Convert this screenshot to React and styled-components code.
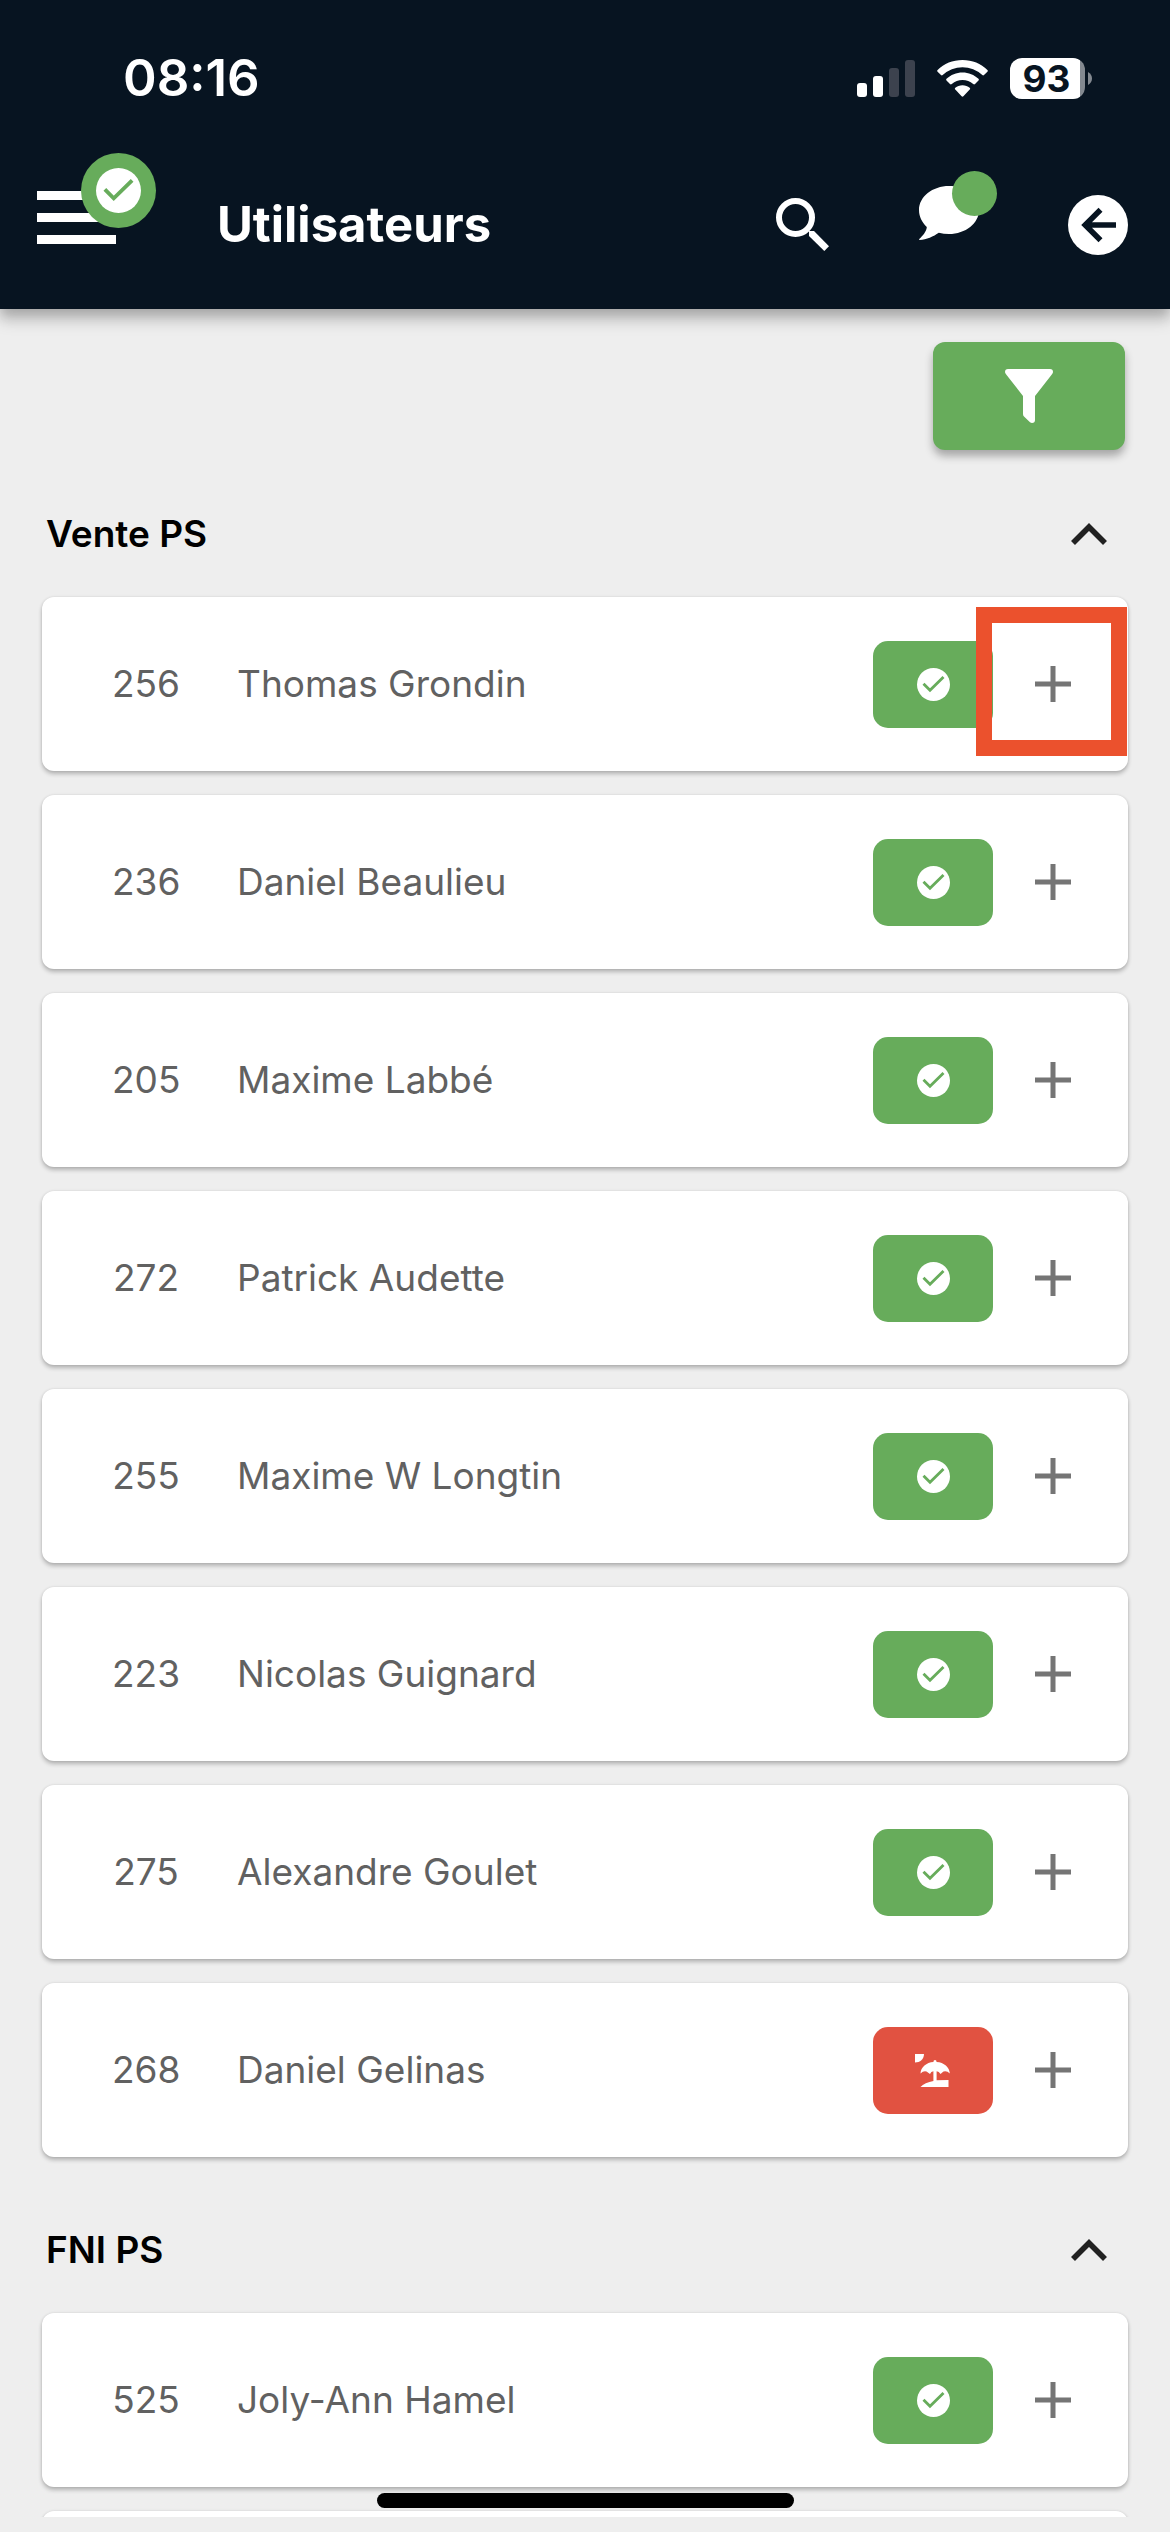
import React, { useState } from "react";
import styled, { createGlobalStyle } from "styled-components";

const GREEN = "#67ac5b";
const RED = "#e15241";
const NAVY = "#071421";

const GlobalStyle = createGlobalStyle`
  *, *::before, *::after { box-sizing: border-box; }
  body {
    margin: 0;
    background: #eeeeee;
    font-family: Inter, Roboto, "Liberation Sans", sans-serif;
  }
  button { font: inherit; color: inherit; border: 0; padding: 0; background: none; cursor: pointer; }
  svg { display: block; flex: none; }
`;

const Screen = styled.div`
  display: flex;
  flex-direction: column;
  height: 100vh;
  padding-bottom: 15px;
  overflow: hidden;
`;

const Header = styled.header`
  z-index: 1;
  flex: none;
  background: ${NAVY};
  color: #fff;
  box-shadow: 0 6px 12px rgba(0, 0, 0, 0.2), 0 12px 15px rgba(0, 0, 0, 0.14);
`;

const StatusBar = styled.div`
  display: flex;
  align-items: center;
  justify-content: space-between;
  height: 156px;
  padding: 0 78px 0 123px;
`;

const Clock = styled.time`
  font-size: 51px;
  font-weight: 600;
  line-height: 60px;
`;

const StatusIcons = styled.div`
  display: flex;
  align-items: center;
  gap: 22px;
`;

const Battery = styled.div`
  display: flex;
  align-items: center;
  gap: 3px;
`;

const BatteryBody = styled.div`
  display: grid;
  place-items: center;
  width: 75px;
  height: 41px;
  padding-right: 2px;
  border-radius: 12px;
  background: linear-gradient(to right, #fff 70px, #838990 70px);
  color: ${NAVY};
  font-size: 37px;
  font-weight: 700;
  line-height: 41px;
`;

const Toolbar = styled.div`
  display: flex;
  align-items: center;
  height: 153px;
  padding: 0 42px 31px 37px;
`;

const MenuButton = styled.button`
  position: relative;
  display: grid;
  gap: 13px;
  width: 79px;
`;

const MenuBar = styled.span`
  height: 9px;
  background: #fff;
`;

const MenuBadge = styled.span`
  position: absolute;
  left: 44px;
  top: -38px;
  display: grid;
  place-items: center;
  width: 75px;
  height: 75px;
  border-radius: 50%;
  background: ${GREEN};
`;

const Title = styled.h1`
  flex: 1;
  margin: 0;
  padding: 15px 0 0 101px;
  font-size: 49px;
  font-weight: 700;
  line-height: 60px;
`;

const Actions = styled.div`
  display: flex;
  align-items: center;
  gap: 89px;
  padding-top: 15px;
`;

const ActionButton = styled.button`
  position: relative;
  display: block;
  padding-bottom: ${(p) => (p.$raised ? 24 : 0)}px;
`;

const NoticeDot = styled.span`
  position: absolute;
  top: -15px;
  right: -18px;
  width: 45px;
  height: 45px;
  border-radius: 50%;
  background: ${GREEN};
`;

const Content = styled.main`
  flex: 1;
  min-height: 0;
  overflow-y: auto;
  scrollbar-width: none;
  padding: 33px 42px 0;
`;

const FilterRow = styled.div`
  display: flex;
  justify-content: flex-end;
  padding-right: 3px;
`;

const FilterButton = styled.button`
  display: grid;
  place-items: center;
  width: 192px;
  height: 108px;
  border-radius: 12px;
  background: ${GREEN};
  box-shadow: 0 6px 9px rgba(0, 0, 0, 0.3);
`;

const Section = styled.section`
  padding-top: 46px;
`;

const SectionHeader = styled.h2`
  margin: 0;
`;

const SectionToggle = styled.button`
  display: flex;
  align-items: center;
  justify-content: space-between;
  width: 100%;
  height: 75px;
  padding: 0 21px 0 4px;
  color: #000;
  font-size: 37px;
  font-weight: 600;
  line-height: 48px;
`;

const CardList = styled.ul`
  display: grid;
  gap: 24px;
  margin: 0;
  padding: 26px 0 9px;
  list-style: none;
`;

const Card = styled.li`
  position: relative;
  display: grid;
  grid-template-columns: 68px 1fr 120px 96px;
  align-items: center;
  height: 174px;
  padding: 0 39px 0 70px;
  border-radius: 12px;
  background: #fff;
  box-shadow: 0 3px 4px rgba(0, 0, 0, 0.24), 0 0 3px rgba(0, 0, 0, 0.1);
  color: #616161;
  font-size: 37px;
  line-height: 48px;
`;

const UserId = styled.span`
  text-align: center;
`;

const UserName = styled.span`
  padding-left: 57px;
`;

const Status = styled.span`
  display: grid;
  place-items: center;
  height: 87px;
  border-radius: 15px;
  background: ${(p) => (p.$away ? RED : GREEN)};
`;

const AddButton = styled.button`
  display: grid;
  place-items: center;
  width: 72px;
  height: 72px;
  margin-left: 24px;
  color: #757575;
`;

const Highlight = styled.span`
  position: absolute;
  top: 10px;
  right: 1px;
  width: 151px;
  height: 149px;
  border: 16px solid #eb512d;
  pointer-events: none;
`;

const HomeIndicator = styled.div`
  position: fixed;
  bottom: 24px;
  left: 50%;
  width: 417px;
  height: 15px;
  margin-left: -208px;
  border-radius: 8px;
  background: #000;
`;

const SignalIcon = () => (
  <svg width="58" height="37" viewBox="0 0 58 37" aria-hidden="true">
    <rect x="0" y="23" width="10" height="14" rx="3" fill="#fff" />
    <rect x="16" y="16" width="10" height="21" rx="3" fill="#fff" />
    <rect x="32" y="8" width="10" height="29" rx="3" fill="#3c424e" />
    <rect x="48" y="0" width="10" height="37" rx="3" fill="#3c424e" />
  </svg>
);

const WifiIcon = () => (
  <svg width="51" height="37" viewBox="0 0 51 37" fill="#fff" aria-hidden="true">
    <path d="M25.500 0C35.300 0 44 3.700 50.400 9.900Q51.300 10.800 50.400 11.700L47 15.100Q46.200 15.900 45.300 15.100A29 29 0 0 0 5.700 15.100Q4.800 15.900 4 15.100L.6 11.700Q-.3 10.800 .6 9.900C7 3.700 15.700 0 25.500 0Z" />
    <path d="M25.500 12.400C31.600 12.400 37.200 14.700 41.500 18.700Q42.400 19.600 41.500 20.500L38 24Q37.200 24.800 36.200 24A16.500 16.500 0 0 0 14.800 24Q13.800 24.800 13 24L9.500 20.500Q8.600 19.600 9.500 18.700C13.800 14.700 19.400 12.400 25.500 12.400Z" />
    <path d="M25.500 25.200C28.300 25.200 30.800 26.200 32.700 27.800Q33.600 28.700 32.700 29.600L26.400 36.200Q25.500 37.100 24.600 36.200L18.300 29.600Q17.400 28.700 18.300 27.800C20.200 26.200 22.700 25.200 25.500 25.200Z" />
  </svg>
);

const BatteryTip = () => (
  <svg width="4" height="13" viewBox="0 0 4 13" aria-hidden="true">
    <path d="M0 0C2.500 1.200 4 3.700 4 6.500S2.500 11.800 0 13Z" fill="#838990" />
  </svg>
);

const CheckDisc = ({ size }) => (
  <svg width={size} height={size} viewBox="0 0 33 33" aria-hidden="true">
    <circle cx="16.500" cy="16.500" r="16.500" fill="#fff" />
    <path d="M6.500 15.700L13 22.300L26.500 9" fill="none" stroke={GREEN} strokeWidth="2.800" />
  </svg>
);

const SearchIcon = () => (
  <svg width="54" height="54" viewBox="0 0 54 54" aria-hidden="true">
    <circle cx="19.500" cy="19.500" r="16.500" fill="none" stroke="#fff" strokeWidth="6" />
    <path d="M33 33h5L53 48.300L48.300 53L33 38Z" fill="#fff" />
  </svg>
);

const ChatIcon = () => (
  <svg width="60" height="54" viewBox="0 0 60 54" fill="#fff" aria-hidden="true">
    <path d="M30 0C46.600 0 60 10.700 60 24S46.600 48 30 48C26.500 48 23 47.600 19.800 46.800C14.500 50.400 7.500 54 .6 54C-.2 54 0 53.300 .5 52.800C3.500 50 7.700 45.200 7.800 41C3 36.500 0 30.500 0 24C0 10.700 13.400 0 30 0Z" />
  </svg>
);

const BackIcon = () => (
  <svg width="60" height="60" viewBox="0 0 60 60" aria-hidden="true">
    <circle cx="30" cy="30" r="30" fill="#fff" />
    <path d="M48 30H18M32.500 14.700L17.200 30L32.500 45.300" fill="none" stroke={NAVY} strokeWidth="5.600" />
  </svg>
);

const FunnelIcon = () => (
  <svg width="48" height="54" viewBox="0 0 48 54" fill="#fff" aria-hidden="true">
    <path d="M3 0H45Q48 0 48 3Q48 4 47 5.300L30 27V51Q30 54 27 54Q26 54 25 53.200L19 47.500Q18 46.500 18 45V27L1 5.300Q0 4 0 3Q0 0 3 0Z" />
  </svg>
);

const ChevronUp = ({ open }) => (
  <svg width="36" height="22" viewBox="0 0 36 22" aria-hidden="true">
    <path
      d={open ? "M2 20L18 4L34 20" : "M2 2L18 18L34 2"}
      fill="none"
      stroke="#212121"
      strokeWidth="5.600"
    />
  </svg>
);

const PlusIcon = () => (
  <svg width="36" height="36" viewBox="0 0 36 36" aria-hidden="true">
    <path d="M18 0V36M0 18H36" stroke="currentColor" strokeWidth="5" />
  </svg>
);

const BeachIcon = () => (
  <svg width="36" height="33" viewBox="0 0 36 33" fill="#fff" aria-hidden="true">
    <path d="M0 0H9C9 5 5 8.500 0 8.500Z" />
    <path d="M20 6Q21.600 6 21.600 8C29 8.500 34.500 13 34.800 19.500Q32 16.500 28.500 17.500L25.500 20Q24 17.500 21.600 17.300V26.300Q28 26 33.500 26V33H5.500C8 30 13 28 18.400 27V17.300Q16 17.500 15 20L11.500 17.500Q8.500 16.500 5.500 19.500C5.800 13 11.500 8.500 18.400 8Q18.400 6 20 6Z" />
  </svg>
);

const sections = [
  {
    title: "Vente PS",
    users: [
      { id: 256, name: "Thomas Grondin", highlighted: true },
      { id: 236, name: "Daniel Beaulieu" },
      { id: 205, name: "Maxime Labbé" },
      { id: 272, name: "Patrick Audette" },
      { id: 255, name: "Maxime W Longtin" },
      { id: 223, name: "Nicolas Guignard" },
      { id: 275, name: "Alexandre Goulet" },
      { id: 268, name: "Daniel Gelinas", away: true },
    ],
  },
  { title: "FNI PS", users: [{ id: 525, name: "Joly-Ann Hamel" }], loading: true },
];

function UserCard({ user }) {
  return (
    <Card>
      <UserId>{user.id}</UserId>
      <UserName>{user.name}</UserName>
      <Status $away={user.away}>{user.away ? <BeachIcon /> : <CheckDisc size={33} />}</Status>
      <AddButton type="button" aria-label={`Ajouter ${user.name}`}>
        <PlusIcon />
      </AddButton>
      {user.highlighted && <Highlight />}
    </Card>
  );
}

function UserSection({ section }) {
  const [open, setOpen] = useState(true);
  return (
    <Section>
      <SectionHeader>
        <SectionToggle type="button" aria-expanded={open} onClick={() => setOpen(!open)}>
          {section.title}
          <ChevronUp open={open} />
        </SectionToggle>
      </SectionHeader>
      {open && (
        <CardList>
          {section.users.map((user) => (
            <UserCard key={user.id} user={user} />
          ))}
          {section.loading && <Card aria-hidden="true" />}
        </CardList>
      )}
    </Section>
  );
}

export default function App() {
  return (
    <Screen>
      <GlobalStyle />
      <Header>
        <StatusBar>
          <Clock>08:16</Clock>
          <StatusIcons>
            <SignalIcon />
            <WifiIcon />
            <Battery>
              <BatteryBody>93</BatteryBody>
              <BatteryTip />
            </Battery>
          </StatusIcons>
        </StatusBar>
        <Toolbar>
          <MenuButton type="button" aria-label="Menu">
            <MenuBar />
            <MenuBar />
            <MenuBar />
            <MenuBadge>
              <CheckDisc size={45} />
            </MenuBadge>
          </MenuButton>
          <Title>Utilisateurs</Title>
          <Actions>
            <ActionButton type="button" aria-label="Rechercher">
              <SearchIcon />
            </ActionButton>
            <ActionButton type="button" aria-label="Messages" $raised>
              <ChatIcon />
              <NoticeDot />
            </ActionButton>
            <ActionButton type="button" aria-label="Retour">
              <BackIcon />
            </ActionButton>
          </Actions>
        </Toolbar>
      </Header>
      <Content>
        <FilterRow>
          <FilterButton type="button" aria-label="Filtrer">
            <FunnelIcon />
          </FilterButton>
        </FilterRow>
        {sections.map((section) => (
          <UserSection key={section.title} section={section} />
        ))}
      </Content>
      <HomeIndicator />
    </Screen>
  );
}
